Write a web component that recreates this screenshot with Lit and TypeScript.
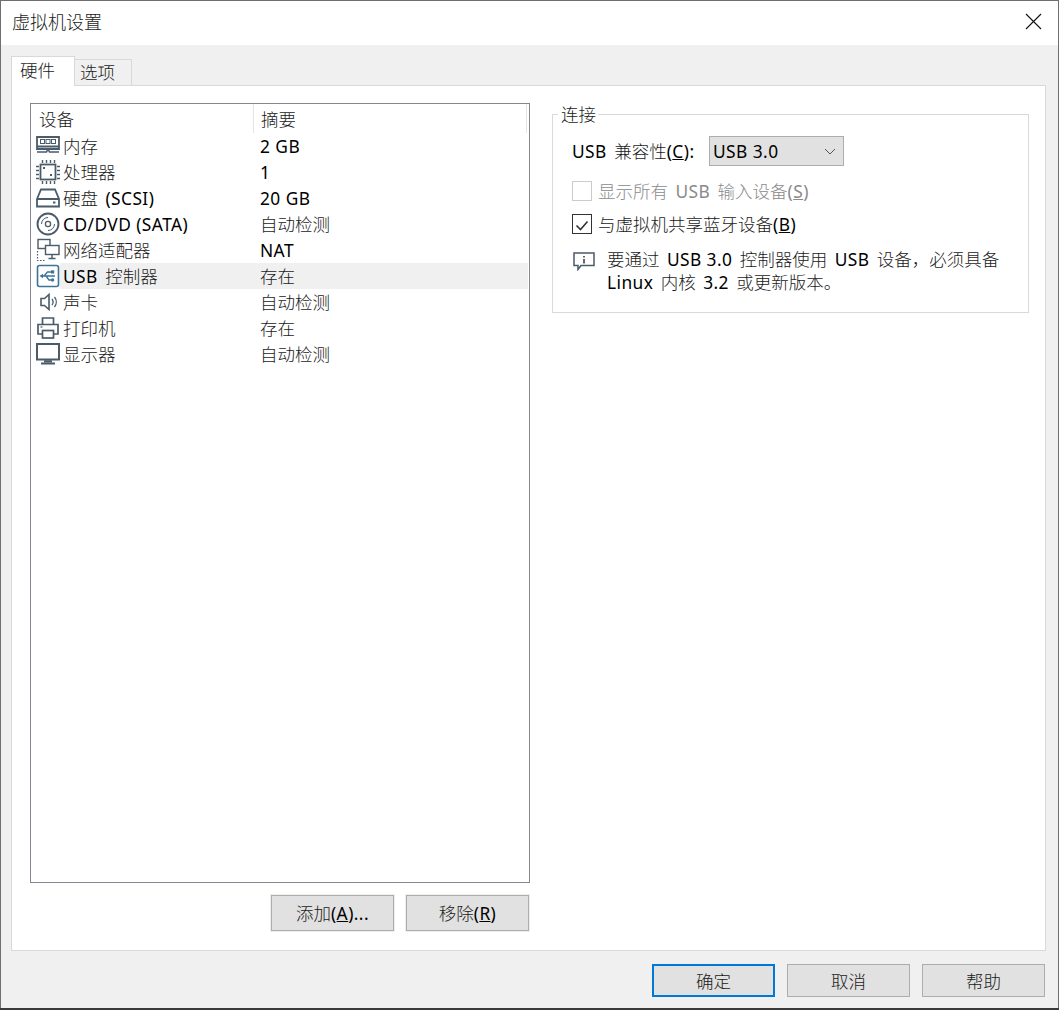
import { LitElement, html, css, svg } from "lit";
import { customElement } from "lit/decorators.js";

const icons: Record<string, unknown> = {
  mem: svg`<path d="M1 3h22v12H1zM1 12.5h22" stroke-width="1.8"/><rect x="4.5" y="5.5" width="4" height="4" stroke-width="1"/><rect x="10" y="5.5" width="4" height="4" stroke-width="1"/><rect x="15.5" y="5.5" width="4" height="4" stroke-width="1"/><path d="M1 18h9.5l1-2h1l1 2H23" stroke-width="1.6"/>`,
  cpu: svg`<rect x="4.5" y="4.5" width="15" height="15" stroke-width="1.8"/><path d="M6.5 0v3M10.5 0v3M14.5 0v3M18.5 0v3M6.5 21v3M10.5 21v3M14.5 21v3M18.5 21v3M0 6.5h3M0 10.5h3M0 14.5h3M0 18.5h3M21 6.5h3M21 10.5h3M21 14.5h3M21 18.5h3" stroke-width="1.4"/><rect x="7" y="7" width="2" height="2" fill="currentColor" stroke="none"/><rect x="14" y="14" width="2" height="2" fill="currentColor" stroke="none"/>`,
  hdd: svg`<path d="M1 13 5 3.5h14L23 13v7.5H1zM1 13h22" stroke-width="1.8"/><rect x="17" y="15.5" width="2.4" height="2" fill="currentColor" stroke="none"/>`,
  cd: svg`<circle cx="12" cy="12" r="10.5" stroke-width="1.9"/><circle cx="12" cy="12" r="2.6" stroke-width="1.3"/><path d="M5.5 12a6.5 6.5 0 0 1 6.5-6.5M18.5 12a6.5 6.5 0 0 1-6.5 6.5" stroke-width="1"/>`,
  net: svg`<rect x="2" y="1.5" width="12" height="9" stroke-width="1.4"/><rect x="9.5" y="7.5" width="13.5" height="9" fill="#fff" stroke-width="1.4"/><path d="M16 16.5v3.5M12.5 20.5h7" stroke-width="1.4"/><path d="M1.5 13v9.5h7" stroke-width="1.2" stroke-dasharray="1.5 1.5"/>`,
  usb: svg`<rect x="1.5" y="1.5" width="21" height="21" rx="2" stroke="#3d7397" stroke-width="1.6"/><path d="M5 12h14M8 12l3.5-4H15M10 12l3 4h2.5" stroke="#3d7397" stroke-width="1.3" /><path d="M3.5 12l3.5-2.2v4.4z" fill="#3d7397" stroke="none"/><rect x="15" y="6.3" width="3.2" height="3.2" fill="#3d7397" stroke="none"/><circle cx="16.6" cy="16" r="1.7" fill="#3d7397" stroke="none"/>`,
  snd: svg`<path d="M5 8.5h3.5L13 4.5v15l-4.5-4H5z" stroke-width="1.6"/><path d="M16 9a5 5 0 0 1 0 6M18.5 7a8 8 0 0 1 0 10" stroke-width="1.3"/>`,
  prn: svg`<path d="M6.5 8V2h11v6M6 18H2V8.5h20V18h-4" stroke-width="1.7"/><rect x="6.5" y="14.5" width="11" height="7.5" stroke-width="1.7"/><path d="M4.5 11h2" stroke-width="1.2"/>`,
  mon: svg`<rect x="1" y="2" width="22" height="15.5" stroke-width="2"/><path d="M8 19.2h8M5 21.5h14" stroke-width="2"/>`,
};

/* Latin and CJK runs need different sizes and tones to match the original's font pairing. */
const t = (s: string) =>
  s.split(/( ?[\u2E80-\uFFFF]+ ?)/).map((p, i) => (i % 2 ? html`<span class="c">${p}</span>` : p));

const rows: [string, string, string][] = [
  ["mem", "内存", "2 GB"],
  ["cpu", "处理器", "1"],
  ["hdd", "硬盘 (SCSI)", "20 GB"],
  ["cd", "CD/DVD (SATA)", "自动检测"],
  ["net", "网络适配器", "NAT"],
  ["usb", "USB 控制器", "存在"],
  ["snd", "声卡", "自动检测"],
  ["prn", "打印机", "存在"],
  ["mon", "显示器", "自动检测"],
];

@customElement("app-root")
export class AppRoot extends LitElement {
  static styles = css`
    :host {
      display: block;
      height: 1010px;
      background: #3a3a3a;
      font-family: "Noto Sans", "Noto Sans CJK SC", sans-serif;
      font-size: 17.33px;
      line-height: 24px;
      letter-spacing: 0.45px;
      color: #000;
    }
    .c {
      font-family: "Noto Sans CJK SC", sans-serif;
      font-size: var(--cjk, 17.5px);
      font-weight: 300;
      line-height: 1;
      letter-spacing: 0;
      word-spacing: 3.5px;
      color: var(--cjk-color, #1a1a1a);
    }
    .win {
      box-sizing: border-box;
      width: 1059px;
      height: 1008px;
      border: 1px solid #6f6f6f;
      border-bottom: 0;
      display: flex;
      flex-direction: column;
      background: #f0f0f0;
    }
    .title {
      box-sizing: border-box;
      height: 44px;
      background: #fff;
      display: flex;
      align-items: center;
      justify-content: space-between;
      padding: 0 16px 3px 11px;
      --cjk: 18px;
      flex: none;
    }
    .close { display: block; }
    .body {
      flex: 1;
      display: flex;
      flex-direction: column;
      padding: 11px 12px 11px 10px;
      min-height: 0;
    }
    .tabs {
      display: flex;
      align-items: flex-end;
      height: 30px;
      flex: none;
      margin-bottom: -1px;
      position: relative;
      z-index: 1;
    }
    .tab {
      box-sizing: border-box;
      border: 1px solid #d9d9d9;
      border-bottom: 0;
    }
    .tab.on {
      width: 64px;
      height: 30px;
      background: #fff;
      padding: 1px 0 0 8px;
    }
    .tab.off {
      width: 57px;
      height: 27px;
      border-left: 0;
      background: #f0f0f0;
      padding: 0 0 0 5px;
      border-bottom: 1px solid #d9d9d9;
    }
    .panel {
      box-sizing: border-box;
      height: 866px;
      flex: none;
      background: #fff;
      border: 1px solid #d9d9d9;
      padding: 17px 16px 0 18px;
      display: grid;
      grid-template-columns: 500px 477px;
      column-gap: 22px;
      align-items: start;
    }
    .left { display: flex; flex-direction: column; }
    .list {
      box-sizing: border-box;
      height: 780px;
      border: 1px solid #828790;
    }
    .head {
      display: grid;
      grid-template-columns: 223px 273px 1fr;
      height: 29px;
      align-items: center;
    }
    .head span.h { box-sizing: border-box; height: 100%; display: flex; align-items: center; }
    .head .a { padding-left: 8px; border-right: 1px solid #e5e5e5; }
    .head .b { padding-left: 7px; border-right: 1px solid #e5e5e5; }
    .row {
      height: 26px;
      display: flex;
      align-items: center;
    }
    .ico {
      width: 29px;
      flex: none;
      display: flex;
      padding-left: 5px;
      box-sizing: border-box;
      color: #4a5b69;
    }
    .ico svg { display: block; fill: none; stroke: currentColor; stroke-width: 2; }
    .cells {
      height: 100%;
      width: 468px;
      display: grid;
      grid-template-columns: 201px 1fr;
      align-items: center;
    }
    .sel .cells { background: #f0f0f0; }
    .name { padding-left: 3px; white-space: nowrap; }
    .val { margin-left: -1px; }
    .btns {
      display: flex;
      justify-content: flex-end;
      gap: 12px;
      margin-top: 12px;
      padding-right: 1px;
    }
    .btn {
      box-sizing: border-box;
      width: 123px;
      background: #e1e1e1;
      border: 1px solid #adadad;
      display: flex;
      align-items: center;
      justify-content: center;
    }
    .btns .btn { height: 36px; outline: 1px solid #eee; }
    .foot {
      display: flex;
      justify-content: flex-end;
      gap: 12px;
      margin-top: 13px;
      padding-right: 1px;
      flex: none;
    }
    .foot .btn { height: 33px; }
    .foot .btn.def { border: 2px solid #0078d7; }
    fieldset {
      box-sizing: border-box;
      margin: 0;
      height: 210px;
      border: 1px solid #d9d9d9;
      padding: 0 0 0 19px;
      min-inline-size: 0;
    }
    legend {
      margin-left: -14px;
      padding: 0 2px 0 3px;
      line-height: 22px;
    }
    .compat {
      display: flex;
      align-items: center;
      height: 30px;
      margin-top: 11px;
    }
    .compat .lbl { width: 137px; white-space: nowrap; }
    .select {
      box-sizing: border-box;
      width: 135px;
      height: 30px;
      background: #e1e1e1;
      border: 1px solid #adadad;
      display: flex;
      align-items: center;
      justify-content: space-between;
      padding: 0 7px 0 3px;
    }
    .check {
      display: flex;
      align-items: center;
      gap: 6px;
      height: 20px;
      margin-top: 13px;
      white-space: nowrap;
    }
    .check.dis { margin-top: 15px; color: #8a8a8a; --cjk-color: #8a8a8a; }
    .box {
      box-sizing: border-box;
      width: 20px;
      height: 20px;
      border: 1px solid #333;
      background: #fff;
      display: block;
      flex: none;
    }
    .dis .box { border-color: #ccc; }
    .note {
      display: flex;
      margin-top: 14px;
      padding-left: 1px;
      gap: 12px;
    }
    .note svg { flex: none; margin-top: 4px; }
    .note p { margin: 0; line-height: 23px; }
  `;

  render() {
    return html`<div class="win">
      <div class="title">
        <span>${t("虚拟机设置")}</span>
        <svg class="close" width="17" height="17" viewBox="0 0 17 17" fill="none" stroke="#111" stroke-width="1.1"><path d="M1 1l15 15M16 1 1 16"/></svg>
      </div>
      <div class="body">
        <div class="tabs">
          <div class="tab on">${t("硬件")}</div>
          <div class="tab off">${t("选项")}</div>
        </div>
        <div class="panel">
          <div class="left">
            <div class="list">
              <div class="head"><span class="h a">${t("设备")}</span><span class="h b">${t("摘要")}</span><span></span></div>
              ${rows.map(
                ([k, n, v]) => html`<div class="row ${k === "usb" ? "sel" : ""}">
                  <div class="ico"><svg width="24" height="24" viewBox="0 0 24 24">${icons[k]}</svg></div>
                  <div class="cells"><span class="name">${t(n)}</span><span class="val">${t(v)}</span></div>
                </div>`
              )}
            </div>
            <div class="btns">
              <div class="btn"><span>${t("添加")}(<u>A</u>)...</span></div>
              <div class="btn"><span>${t("移除")}(<u>R</u>)</span></div>
            </div>
          </div>
          <fieldset>
            <legend>${t("连接")}</legend>
            <div class="compat">
              <span class="lbl">${t("USB 兼容性")}(<u>C</u>):</span>
              <div class="select">
                <span>USB 3.0</span>
                <svg width="12" height="7" viewBox="0 0 12 7" fill="none" stroke="#555" stroke-width="1"><path d="M1 1l5 5 5-5"/></svg>
              </div>
            </div>
            <div class="check dis"><span class="box"></span><span>${t("显示所有 USB 输入设备")}(<u>S</u>)</span></div>
            <div class="check">
              <span class="box"><svg width="18" height="18" viewBox="0 0 18 18" fill="none" stroke="#333" stroke-width="1.6"><path d="M3.5 9.5l4 4 7-8"/></svg></span>
              <span>${t("与虚拟机共享蓝牙设备")}(<u>B</u>)</span>
            </div>
            <div class="note">
              <svg width="22" height="19" viewBox="0 0 22 19" fill="none" stroke="#4a5b69" stroke-width="1.5"><path d="M1 1h20v12.5H8l-3 4v-4H1z"/><path d="M11 4v1.5M11 7v4.5" stroke="#333"/></svg>
              <p>${t("要通过 USB 3.0 控制器使用 USB 设备，必须具备")}<br />${t("Linux 内核 3.2 或更新版本。")}</p>
            </div>
          </fieldset>
        </div>
        <div class="foot">
          <div class="btn def">${t("确定")}</div>
          <div class="btn">${t("取消")}</div>
          <div class="btn">${t("帮助")}</div>
        </div>
      </div>
    </div>`;
  }
}
